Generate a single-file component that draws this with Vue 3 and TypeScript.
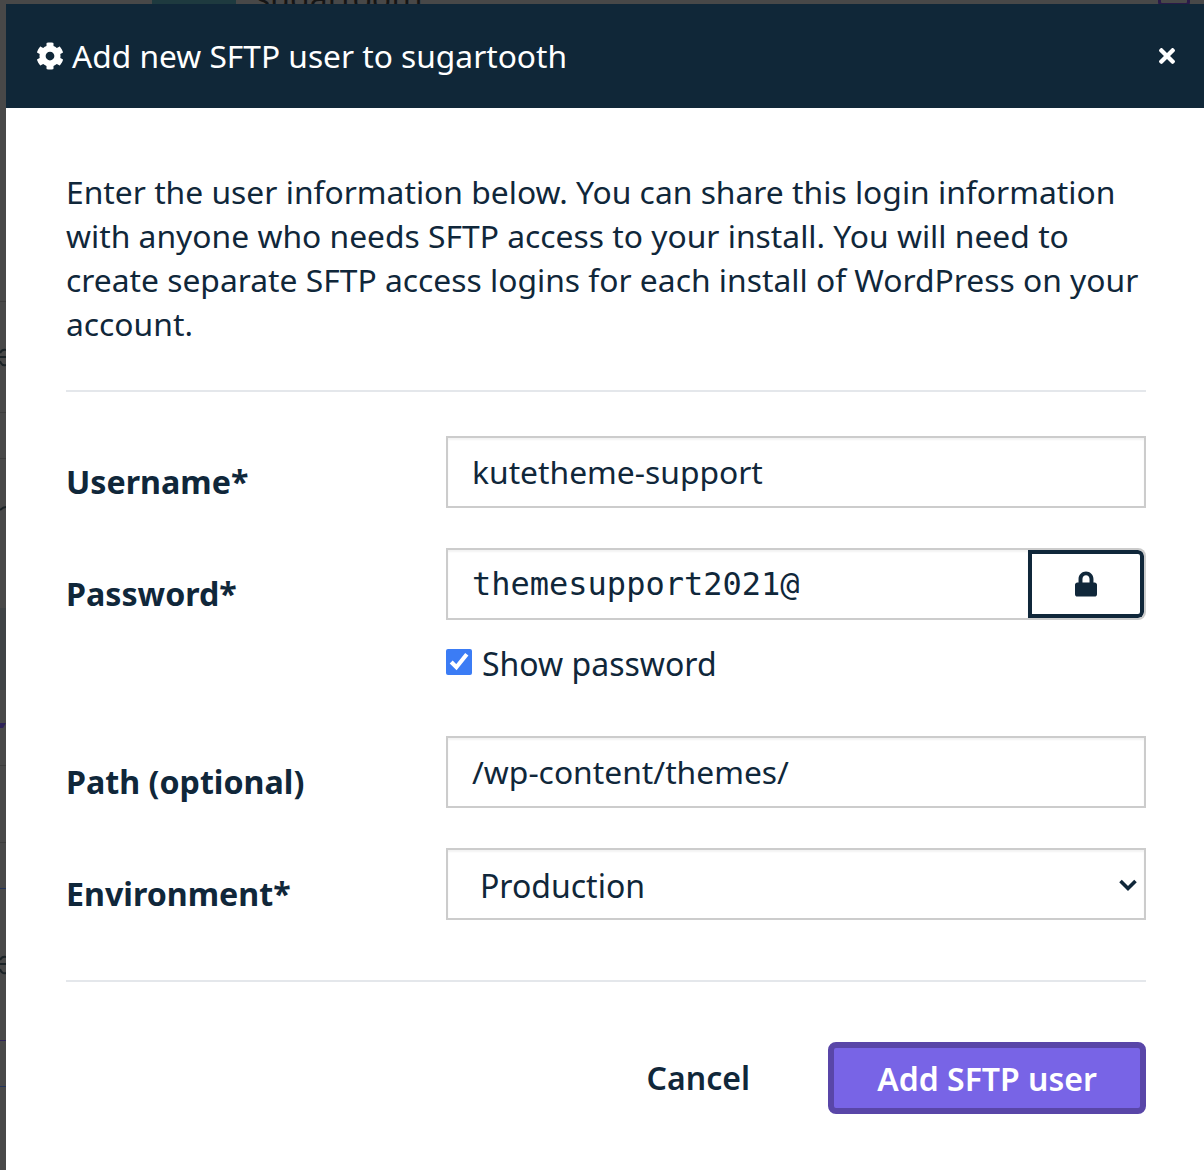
<script setup lang="ts">
const intro =
  'Enter the user information below. You can share this login information with anyone who needs SFTP access to your install. You will need to create separate SFTP access logins for each install of WordPress on your account.'

const edgeLines = [
  { top: 301, color: '#3c3c3c' },
  { top: 412, color: '#3c3c3c' },
  { top: 458, color: '#3c3c3c' },
  { top: 765, color: '#3c3c3c' },
  { top: 842, color: '#3c3c3c' },
  { top: 888, color: '#22335a' },
  { top: 1040, color: '#2d2258' },
  { top: 1086, color: '#22335a' },
]
</script>

<template>
  <div class="page">
    <div class="backdrop">
      <span class="bg-tab"></span>
      <span class="bg-title">sugartooth</span>
      <span class="bg-badge"></span>
      <span class="bg-block"></span>
      <span
        v-for="line in edgeLines"
        :key="line.top"
        class="bg-line"
        :style="{ top: line.top + 'px', background: line.color }"
      ></span>
      <svg class="bg-marks" viewBox="0 0 6 1170" aria-hidden="true">
        <path d="M6 350C3 349 1 351 0 353M0 357H6M0 361C1 364 3 366 6 365" fill="none" stroke="#1a2226" stroke-width="2" />
        <path d="M0 510C2 508 4 507 6 507" fill="none" stroke="#1a2226" stroke-width="2" />
        <path d="M0 723H6L3 728H0Z" fill="#2d2258" />
        <path d="M6 957C3 956 1 958 0 960M0 964H6M0 969C1 972 3 974 6 973" fill="none" stroke="#1a2226" stroke-width="2" />
      </svg>
    </div>
    <section class="modal">
      <header class="head">
        <h1 class="title">
          <svg class="gear" viewBox="0 0 512 512" aria-hidden="true">
            <path fill="currentColor" d="M487.4 315.7l-42.6-24.6c4.3-23.2 4.3-47 0-70.2l42.6-24.6c4.9-2.8 7.1-8.6 5.5-14-11.1-35.6-30-67.8-54.7-94.6-3.8-4.1-10-5.1-14.8-2.3L380.8 110c-17.9-15.4-38.5-27.3-60.8-35.1V25.8c0-5.6-3.9-10.5-9.4-11.7-36.7-8.2-74.3-7.8-109.2 0-5.5 1.2-9.4 6.1-9.4 11.7V75c-22.2 7.9-42.8 19.8-60.8 35.1L88.7 85.5c-4.9-2.8-11-1.9-14.8 2.3-24.7 26.7-43.6 58.9-54.7 94.6-1.7 5.4.6 11.2 5.5 14L67.3 221c-4.3 23.2-4.3 47 0 70.2l-42.6 24.6c-4.9 2.8-7.1 8.6-5.5 14 11.1 35.6 30 67.8 54.7 94.6 3.8 4.1 10 5.1 14.8 2.3l42.6-24.6c17.9 15.4 38.5 27.3 60.8 35.1v49.2c0 5.6 3.9 10.5 9.4 11.7 36.7 8.2 74.3 7.8 109.2 0 5.5-1.2 9.4-6.1 9.4-11.7v-49.2c22.2-7.9 42.8-19.8 60.8-35.1l42.6 24.6c4.9 2.8 11 1.9 14.8-2.3 24.7-26.7 43.6-58.9 54.7-94.6 1.5-5.5-.7-11.3-5.6-14.1zM256 336c-44.1 0-80-35.9-80-80s35.9-80 80-80 80 35.9 80 80-35.9 80-80 80z" />
          </svg>
          <span>Add new SFTP user to sugartooth</span>
        </h1>
        <button class="close" type="button" aria-label="Close">
          <svg viewBox="0 0 352 512" aria-hidden="true">
            <path fill="currentColor" d="M242.72 256l100.07-100.07c12.28-12.28 12.28-32.19 0-44.48l-22.24-22.24c-12.28-12.28-32.19-12.28-44.48 0L176 189.28 75.93 89.21c-12.28-12.28-32.19-12.28-44.48 0L9.21 111.45c-12.28 12.28-12.28 32.19 0 44.48L109.28 256 9.21 356.07c-12.28 12.28-12.28 32.19 0 44.48l22.24 22.24c12.28 12.28 32.2 12.28 44.48 0L176 322.72l100.07 100.07c12.28 12.28 32.2 12.28 44.48 0l22.24-22.24c12.28-12.28 12.28-32.19 0-44.48L242.72 256z" />
          </svg>
        </button>
      </header>

      <div class="body">
        <p class="intro">{{ intro }}</p>
        <hr class="rule" />

        <form class="form" @submit.prevent>
          <div class="row row-user">
            <label class="label">Username*</label>
            <input class="input" type="text" value="kutetheme-support" />
          </div>

          <div class="row row-pass">
            <label class="label">Password*</label>
            <div class="field">
              <div class="pass">
                <input class="input mono" type="text" value="themesupport2021@" />
                <button class="lock" type="button" aria-label="Generate password">
                  <svg viewBox="0 0 448 512" aria-hidden="true">
                    <path fill="currentColor" d="M400 224h-24v-72C376 68.2 307.8 0 224 0S72 68.2 72 152v72H48c-26.5 0-48 21.5-48 48v192c0 26.5 21.5 48 48 48h352c26.5 0 48-21.5 48-48V272c0-26.5-21.5-48-48-48zm-104 0H152v-72c0-39.7 32.3-72 72-72s72 32.3 72 72v72z" />
                  </svg>
                </button>
              </div>
              <label class="show">
                <input class="check" type="checkbox" checked />
                <span>Show password</span>
              </label>
            </div>
          </div>

          <div class="row row-path">
            <label class="label">Path (optional)</label>
            <input class="input" type="text" value="/wp-content/themes/" />
          </div>

          <div class="row row-env">
            <label class="label">Environment*</label>
            <div class="select">
              <span>Production</span>
              <svg class="chev" viewBox="0 0 20 14" aria-hidden="true">
                <path d="M2.5 3 10 10.5 17.5 3" fill="none" stroke="currentColor" stroke-width="3.6" />
              </svg>
            </div>
          </div>

          <hr class="rule rule-bottom" />

          <div class="actions">
            <button class="cancel" type="button">Cancel</button>
            <button class="submit" type="submit">Add SFTP user</button>
          </div>
        </form>
      </div>
    </section>
  </div>
</template>

<style>
html,
body {
  margin: 0;
  background: #484848;
}
</style>

<style scoped>
.page {
  position: relative;
  width: 1204px;
  height: 1170px;
  overflow: hidden;
  background: #484848;
  font-family: "Noto Sans", "Open Sans", sans-serif;
  color: #10273a;
}
.backdrop {
  position: absolute;
  inset: 0;
}
.bg-title {
  position: absolute;
  left: 255px;
  top: -24px;
  height: 28px;
  overflow: hidden;
  font-size: 32px;
  line-height: 44px;
  color: #151515;
}
.bg-tab {
  position: absolute;
  left: 152px;
  top: 0;
  width: 84px;
  height: 4px;
  background: #1e3a3f;
}
.bg-badge {
  position: absolute;
  left: 1158px;
  top: -20px;
  width: 26px;
  height: 20px;
  border: 3px solid #2a1a48;
  border-radius: 4px;
  box-sizing: content-box;
}
.bg-block {
  position: absolute;
  left: 0;
  top: 608px;
  width: 6px;
  height: 82px;
  background: #3f4345;
}
.bg-line {
  position: absolute;
  left: 0;
  width: 6px;
  height: 1px;
}
.bg-marks {
  position: absolute;
  left: 0;
  top: 0;
  width: 6px;
  height: 1170px;
}
.modal {
  position: absolute;
  left: 6px;
  top: 4px;
  width: 1198px;
  height: 1166px;
  background: #fff;
}
.head {
  height: 104px;
  box-sizing: border-box;
  padding: 0 29px 0 30px;
  display: flex;
  align-items: center;
  justify-content: space-between;
  background: #102738;
  color: #fff;
}
.title {
  margin: 0;
  display: flex;
  align-items: center;
  gap: 8px;
  font-size: 31.7px;
  line-height: 44px;
  font-weight: 400;
}
.gear {
  width: 28px;
  height: 28px;
}
.close {
  padding: 0;
  width: 16px;
  height: 24px;
  border: 0;
  background: none;
  color: #fff;
  display: flex;
}
.close svg {
  width: 16px;
  height: 24px;
}
.body {
  padding: 62px 58px 0 60px;
}
.intro {
  margin: 0;
  font-size: 31.8px;
  line-height: 44px;
}
.rule {
  margin: 44px 0 0;
  border: 0;
  border-top: 2px solid #e4e7eb;
}
.form {
  display: block;
}
.row {
  display: grid;
  grid-template-columns: 380px 700px;
  align-items: start;
}
.row-user {
  margin-top: 44px;
}
.row-pass {
  margin-top: 40px;
}
.row-path {
  margin-top: 50px;
}
.row-env {
  margin-top: 40px;
}
.label {
  font-size: 32.2px;
  line-height: 44px;
  font-weight: 700;
  padding-top: 24px;
}
.input {
  box-sizing: border-box;
  width: 100%;
  height: 72px;
  margin: 0;
  padding: 0 24px 2px;
  border: 2px solid #ccc;
  border-radius: 0;
  box-shadow: inset 0 2px 2px rgba(0, 0, 0, 0.05);
  font: inherit;
  font-size: 31.8px;
  color: #10273a;
  background: #fff;
  outline: none;
}
.mono {
  font-family: "DejaVu Sans Mono", monospace;
  font-size: 32px;
  padding-bottom: 0;
  border-right: 0;
  flex: 1;
  min-width: 0;
}
.pass {
  display: flex;
  height: 72px;
}
.lock {
  box-sizing: border-box;
  flex: none;
  width: 118px;
  height: 72px;
  padding: 0;
  border: 2px solid #ccc;
  border-left: 0;
  border-radius: 0 8px 8px 0;
  background: #fff;
  color: #10273a;
  box-shadow: inset 0 0 0 4px #10273a;
  display: flex;
  align-items: center;
  justify-content: center;
}
.lock svg {
  width: 22px;
  height: 26px;
}
.show {
  display: flex;
  align-items: center;
  gap: 10px;
  margin-top: 22px;
  font-size: 32px;
  line-height: 44px;
}
.check {
  margin: 0 0 4px;
  width: 26px;
  height: 26px;
  accent-color: #3b7cf5;
}
.select {
  box-sizing: border-box;
  height: 72px;
  padding: 2px 6px 0 32px;
  border: 2px solid #ccc;
  box-shadow: inset 0 2px 2px rgba(0, 0, 0, 0.05);
  display: flex;
  align-items: center;
  justify-content: space-between;
  font-size: 32px;
}
.chev {
  width: 20px;
  height: 14px;
}
.rule-bottom {
  margin-top: 60px;
}
.actions {
  display: flex;
  justify-content: flex-end;
  align-items: center;
  gap: 78px;
  margin-top: 60px;
}
.cancel {
  padding: 0;
  border: 0;
  background: none;
  font: inherit;
  font-size: 32px;
  line-height: 44px;
  font-weight: 600;
  color: #10273a;
}
.submit {
  box-sizing: border-box;
  width: 318px;
  height: 72px;
  padding: 0;
  border: 6px solid #5946a8;
  border-radius: 8px;
  background: #7864e6;
  color: #fff;
  font: inherit;
  font-size: 32px;
  font-weight: 600;
}
</style>
